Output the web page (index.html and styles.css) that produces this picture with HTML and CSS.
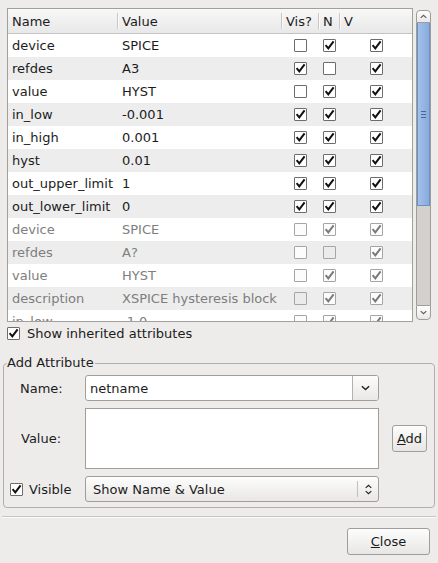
FILE: index.html
```html
<!DOCTYPE html>
<html>
<head>
    <title>Edit Attributes</title>
    <link rel="stylesheet" href="styles.css">
</head>
<body>
    <svg class="defs" width="0" height="0">
        <symbol id="tick" viewBox="0 0 11 11">
            <path d="M1.6 5.2 L4.3 8.4 L9.6 1.4" fill="none" stroke="currentColor" stroke-width="2"/>
        </symbol>
        <symbol id="chev-down" viewBox="0 0 10 6">
            <path d="M1 1 L5 4.8 L9 1" fill="none" stroke="currentColor" stroke-width="1.6"/>
        </symbol>
        <symbol id="chev-up" viewBox="0 0 10 6">
            <path d="M1 5 L5 1.2 L9 5" fill="none" stroke="currentColor" stroke-width="1.6"/>
        </symbol>
    </svg>

    <div class="dialog">
        <div class="attr-area">
            <div class="attr-table">
                <div class="attr-head">
                    <div class="head-cell">Name</div>
                    <div class="head-cell sep">Value</div>
                    <div class="head-cell sep">Vis?</div>
                    <div class="head-cell sep">N</div>
                    <div class="head-cell sep">V</div>
                </div>
                <div class="attr-rows">
                    <div class="attr-row">
                        <div class="cell">device</div><div class="cell val">SPICE</div>
                        <div class="cell box-cell"><span class="check"></span></div>
                        <div class="cell box-cell"><span class="check"><svg><use href="#tick"/></svg></span></div>
                        <div class="cell box-cell"><span class="check"><svg><use href="#tick"/></svg></span></div>
                    </div>
                    <div class="attr-row">
                        <div class="cell">refdes</div><div class="cell val">A3</div>
                        <div class="cell box-cell"><span class="check"><svg><use href="#tick"/></svg></span></div>
                        <div class="cell box-cell"><span class="check"></span></div>
                        <div class="cell box-cell"><span class="check"><svg><use href="#tick"/></svg></span></div>
                    </div>
                    <div class="attr-row">
                        <div class="cell">value</div><div class="cell val">HYST</div>
                        <div class="cell box-cell"><span class="check"></span></div>
                        <div class="cell box-cell"><span class="check"><svg><use href="#tick"/></svg></span></div>
                        <div class="cell box-cell"><span class="check"><svg><use href="#tick"/></svg></span></div>
                    </div>
                    <div class="attr-row">
                        <div class="cell">in_low</div><div class="cell val">-0.001</div>
                        <div class="cell box-cell"><span class="check"><svg><use href="#tick"/></svg></span></div>
                        <div class="cell box-cell"><span class="check"><svg><use href="#tick"/></svg></span></div>
                        <div class="cell box-cell"><span class="check"><svg><use href="#tick"/></svg></span></div>
                    </div>
                    <div class="attr-row">
                        <div class="cell">in_high</div><div class="cell val">0.001</div>
                        <div class="cell box-cell"><span class="check"><svg><use href="#tick"/></svg></span></div>
                        <div class="cell box-cell"><span class="check"><svg><use href="#tick"/></svg></span></div>
                        <div class="cell box-cell"><span class="check"><svg><use href="#tick"/></svg></span></div>
                    </div>
                    <div class="attr-row">
                        <div class="cell">hyst</div><div class="cell val">0.01</div>
                        <div class="cell box-cell"><span class="check"><svg><use href="#tick"/></svg></span></div>
                        <div class="cell box-cell"><span class="check"><svg><use href="#tick"/></svg></span></div>
                        <div class="cell box-cell"><span class="check"><svg><use href="#tick"/></svg></span></div>
                    </div>
                    <div class="attr-row">
                        <div class="cell">out_upper_limit</div><div class="cell val">1</div>
                        <div class="cell box-cell"><span class="check"><svg><use href="#tick"/></svg></span></div>
                        <div class="cell box-cell"><span class="check"><svg><use href="#tick"/></svg></span></div>
                        <div class="cell box-cell"><span class="check"><svg><use href="#tick"/></svg></span></div>
                    </div>
                    <div class="attr-row">
                        <div class="cell">out_lower_limit</div><div class="cell val">0</div>
                        <div class="cell box-cell"><span class="check"><svg><use href="#tick"/></svg></span></div>
                        <div class="cell box-cell"><span class="check"><svg><use href="#tick"/></svg></span></div>
                        <div class="cell box-cell"><span class="check"><svg><use href="#tick"/></svg></span></div>
                    </div>
                    <!-- inherited from the symbol -->
                    <div class="attr-row inherited">
                        <div class="cell">device</div><div class="cell val">SPICE</div>
                        <div class="cell box-cell"><span class="check"></span></div>
                        <div class="cell box-cell"><span class="check"><svg><use href="#tick"/></svg></span></div>
                        <div class="cell box-cell"><span class="check"><svg><use href="#tick"/></svg></span></div>
                    </div>
                    <div class="attr-row inherited">
                        <div class="cell">refdes</div><div class="cell val">A?</div>
                        <div class="cell box-cell"><span class="check"></span></div>
                        <div class="cell box-cell"><span class="check off"></span></div>
                        <div class="cell box-cell"><span class="check"><svg><use href="#tick"/></svg></span></div>
                    </div>
                    <div class="attr-row inherited">
                        <div class="cell">value</div><div class="cell val">HYST</div>
                        <div class="cell box-cell"><span class="check"></span></div>
                        <div class="cell box-cell"><span class="check"><svg><use href="#tick"/></svg></span></div>
                        <div class="cell box-cell"><span class="check"><svg><use href="#tick"/></svg></span></div>
                    </div>
                    <div class="attr-row inherited">
                        <div class="cell">description</div><div class="cell val">XSPICE hysteresis block</div>
                        <div class="cell box-cell"><span class="check off"></span></div>
                        <div class="cell box-cell"><span class="check"><svg><use href="#tick"/></svg></span></div>
                        <div class="cell box-cell"><span class="check"><svg><use href="#tick"/></svg></span></div>
                    </div>
                    <div class="attr-row inherited">
                        <div class="cell">in_low</div><div class="cell val">-1.0</div>
                        <div class="cell box-cell"><span class="check"></span></div>
                        <div class="cell box-cell"><span class="check"><svg><use href="#tick"/></svg></span></div>
                        <div class="cell box-cell"><span class="check"><svg><use href="#tick"/></svg></span></div>
                    </div>
                </div>
            </div>
            <div class="scrollbar">
                <div class="sb-btn sb-up"><svg><use href="#chev-up"/></svg></div>
                <div class="sb-trough">
                    <div class="sb-thumb">
                        <span class="grip"></span>
                        <span class="grip"></span>
                        <span class="grip"></span>
                    </div>
                </div>
                <div class="sb-btn sb-down"><svg><use href="#chev-down"/></svg></div>
            </div>
        </div>

        <div class="inherit-toggle">
            <span class="check"><svg><use href="#tick"/></svg></span>
            <span>Show inherited attributes</span>
        </div>

        <fieldset class="add-group">
            <legend>Add Attribute</legend>
            <div class="field-label">Name:</div>
            <div class="combo">
                <span class="combo-text">netname</span>
                <span class="combo-arrow"><svg><use href="#chev-down"/></svg></span>
            </div>
            <div></div>

            <div class="field-label value-label">Value:</div>
            <div class="value-box"></div>
            <button class="push-btn add-btn"><u>A</u>dd</button>

            <div class="visible-toggle">
                <span class="check"><svg><use href="#tick"/></svg></span>
                <span>Visible</span>
            </div>
            <div class="combo combo-button">
                <span class="combo-text">Show Name &amp; Value</span>
                <span class="combo-spin">
                    <svg class="spin-up"><use href="#chev-up"/></svg>
                    <svg class="spin-down"><use href="#chev-down"/></svg>
                </span>
            </div>
            <div></div>
        </fieldset>

        <div class="divider"></div>

        <div class="footer">
            <button class="push-btn close-btn"><u>C</u>lose</button>
        </div>
    </div>
</body>
</html>
```

FILE: styles.css
```css
body {
    margin: 0;
    width: 438px;
    height: 563px;
    overflow: hidden;
    background: #edeceb;
    font-family: 'DejaVu Sans', 'Liberation Sans', sans-serif;
    font-size: 13px;
    color: #1c1c1c;
}
.defs {
    position: absolute;
}
.dialog {
    display: flex;
    flex-direction: column;
}

/* attribute list */
.attr-area {
    display: flex;
    gap: 3px;
    height: 314px;
    margin: 8px 7px 0 7px;
}
.attr-table {
    flex: 1;
    display: flex;
    flex-direction: column;
    overflow: hidden;
    border: 1px solid #a2a09c;
    background: #fff;
}
.attr-head, .attr-row {
    display: grid;
    grid-template-columns: 109px 164px 37px 21px 1fr;
}
.attr-head {
    height: 24px;
    flex-shrink: 0;
    background: linear-gradient(#f8f8f8, #e8e8e8);
    border-bottom: 1px solid #c4c3c1;
}
.head-cell {
    display: flex;
    align-items: center;
    padding-left: 4px;
    position: relative;
}
.head-cell.sep {
    padding-left: 5px;
}
.head-cell.sep::before {
    content: "";
    position: absolute;
    left: 0;
    top: 4px;
    bottom: 4px;
    width: 1px;
    background: #c8c7c5;
    box-shadow: 1px 0 0 #fbfbfb;
}
.attr-rows {
    flex: 1;
    overflow: hidden;
}
.attr-row {
    height: 23px;
}
.attr-row:nth-child(even) {
    background: #ededed;
}
.cell {
    display: flex;
    align-items: center;
    padding-left: 4px;
    white-space: nowrap;
    overflow: hidden;
}
.cell.val {
    padding-left: 5px;
}
.box-cell {
    justify-content: center;
    padding-left: 2px;
}
.check {
    width: 13px;
    height: 13px;
    box-sizing: border-box;
    display: flex;
    align-items: center;
    justify-content: center;
    flex-shrink: 0;
    border: 1px solid #6e6d6b;
    border-radius: 1px;
    background: #fff;
    color: #111;
}
.check svg {
    width: 11px;
    height: 11px;
}
.attr-row.inherited {
    color: #7e7e7e;
}
.inherited .check {
    border-color: #a6a5a3;
    color: #7a7a7a;
    background: #fcfcfc;
}
.inherited .check.off {
    background: #ebebeb;
}

/* scrollbar */
.scrollbar {
    width: 15px;
    height: 310px;
    margin-top: 2px;
    display: flex;
    flex-direction: column;
}
.sb-btn {
    height: 13px;
    flex-shrink: 0;
    box-sizing: border-box;
    display: flex;
    align-items: center;
    justify-content: center;
    border: 1px solid #a09d98;
    background: linear-gradient(#ffffff, #e9e8e6);
    color: #5c5c5c;
}
.sb-btn svg {
    width: 7px;
    height: 5px;
}
.sb-up {
    border-radius: 4px 4px 0 0;
}
.sb-down {
    height: 15px;
    border-radius: 0 0 4px 4px;
}
.sb-trough {
    flex: 1;
    background: #d3d1cd;
    border-left: 1px solid #a09d98;
    border-right: 1px solid #a09d98;
}
.sb-thumb {
    height: 183px;
    box-sizing: border-box;
    display: flex;
    flex-direction: column;
    align-items: center;
    justify-content: center;
    gap: 2px;
    border: 1px solid #6a90c8;
    border-top: none;
    background: linear-gradient(90deg, #a3c0e9, #88abdd);
}
.grip {
    width: 5px;
    height: 1px;
    background: #48689b;
}

/* show inherited */
.inherit-toggle {
    display: flex;
    align-items: center;
    gap: 7px;
    height: 17px;
    margin: 3px 0 0 7px;
}

/* add attribute group */
.add-group {
    margin: 13px 3px 0 3px;
    padding: 4px 7px 5px 0;
    min-inline-size: 0;
    border: 1px solid #b3b0aa;
    border-radius: 4px;
    display: grid;
    grid-template-columns: 68px 294px 35px;
    grid-template-rows: 26px 61px 26px;
    column-gap: 13px;
    row-gap: 7px;
}
.add-group legend {
    margin-left: 3px;
    padding: 0 1px 0 0;
    line-height: 16px;
}
.field-label {
    display: flex;
    align-items: center;
    padding-left: 16px;
}
.value-label {
    padding-left: 17px;
}
.combo {
    display: flex;
    box-sizing: border-box;
    border: 1px solid #a19e99;
    border-radius: 3px;
    background: #fff;
}
.combo-text {
    flex: 1;
    display: flex;
    align-items: center;
    padding-left: 4px;
}
.combo-arrow {
    width: 25px;
    display: flex;
    align-items: center;
    justify-content: center;
    border-left: 1px solid #b4b1ac;
    border-radius: 0 2px 2px 0;
    background: linear-gradient(#fcfcfc, #e9e8e6);
    color: #222;
}
.combo-arrow svg {
    width: 9px;
    height: 6px;
}
.combo-button {
    background: linear-gradient(#fdfdfd, #e8e7e5);
}
.combo-button .combo-text {
    padding-left: 7px;
}
.combo-spin {
    width: 20px;
    margin: 4px 0;
    display: flex;
    flex-direction: column;
    align-items: center;
    justify-content: center;
    gap: 1px;
    border-left: 1px solid #c2bfba;
    color: #222;
}
.combo-spin svg {
    width: 7px;
    height: 5px;
}
.value-box {
    box-sizing: border-box;
    border: 1px solid #a19e99;
    background: #fff;
}
.visible-toggle {
    display: flex;
    align-items: center;
    gap: 6px;
    padding-left: 6px;
}
.push-btn {
    font: inherit;
    color: #1c1c1c;
    padding: 0;
    border: 1px solid #a19e99;
    border-radius: 3px;
    background: linear-gradient(#fdfdfd, #e7e6e4);
}
.add-btn {
    height: 27px;
    align-self: center;
}

/* bottom */
.divider {
    height: 1px;
    margin: 8px 2px 0 2px;
    background: #c9c6c1;
    border-bottom: 1px solid #fbfbfa;
}
.footer {
    display: flex;
    justify-content: flex-end;
    padding: 10px 8px 0 0;
}
.close-btn {
    width: 83px;
    height: 27px;
}
```
